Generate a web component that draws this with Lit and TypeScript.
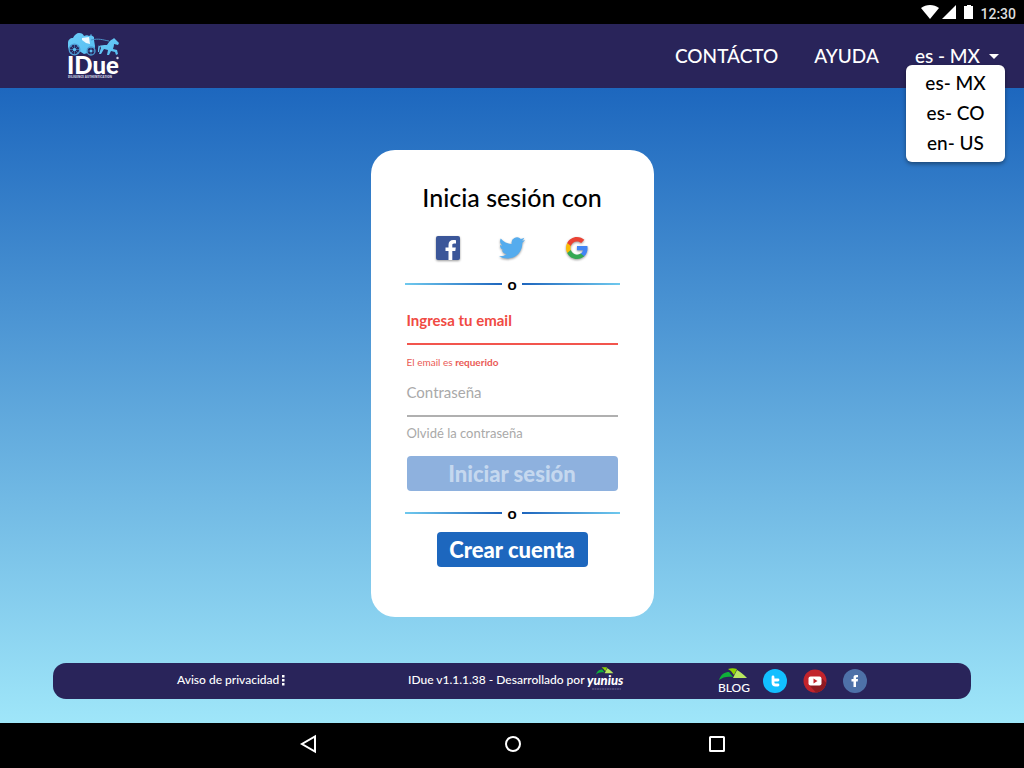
import { LitElement, html, css, svg } from "lit";
import { customElement, state } from "lit/decorators.js";

const brandLogo = html`<svg class="brand-art" viewBox="0 0 54 50" aria-label="IDue">
  <defs>
    <linearGradient id="sky" x1="0" y1="0" x2="1" y2="1">
      <stop offset="0" stop-color="#6ccdf8" /><stop offset="1" stop-color="#55bdf2" />
    </linearGradient>
  </defs>
  <g fill="url(#sky)">
    <path d="M2 12c0-3 2-5 5-5 1-3 4-5 6-5 3 0 4 1 5 3 2-1 4-1 5 0l2-1 3 2v3l1 6c0 3-1 5-3 6l-8 2-8-5-7 1-1-3z" />
    <path d="M33 15c2-1 5-1 8-1 2-3 3-5 6-6l1-1 1 1 4 4-1 2-4-1c0 3-1 4-1 5l4 1 1 4-2 1-1-3-4-1-2 4h-2l1-5-4-1-3 5h-2l2-6-1-2-1 6h-1c0-3 0-5 1-7z" />
  </g>
  <path d="M16 7l7-1 1 7-4-1-4-3z" fill="#eaf8ff" />
  <path d="M25 5V3M25 9c8-2 12 0 18 1" fill="none" stroke="#4a8fc6" stroke-width="1" />
  <g fill="#29265c" stroke="#4b9bd3" stroke-width="1.3">
    <circle cx="8.500" cy="18.500" r="5.300" /><circle cx="25" cy="20" r="4" />
  </g>
  <path d="M3 18.500h11M8.500 13v11M4.700 14.700l7.600 7.600M12.300 14.700l-7.600 7.600M21 20h8M25 16v8" stroke="#4b9bd3" stroke-width=".6" />
  <circle cx="8.500" cy="18.500" r="1.600" fill="#5ec3f5" /><circle cx="25" cy="20" r="1.300" fill="#5ec3f5" />
  <text x="1" y="43" font-size="24" font-weight="900" fill="#fff" font-family="Lato, sans-serif">IDue</text>
  <circle cx="51.500" cy="27" r="1.200" fill="#d5d4e4" />
  <text x="2" y="47" font-size="3" font-weight="900" fill="#c6c5da" font-family="Open Sans, sans-serif">DILIGENCE AUTHENTICATION</text>
</svg>`;

const leaves = svg`
  <path d="M0 12C2 6 6 4 10 4l4 5C8 8 4 9 0 12z" fill="#10b03a" />
  <path d="M9 1c3-1 6-1 9 0l-3 6-3-4z" fill="#8fd400" />
  <path d="M18 2c4 2 7 5 10 8H14z" fill="#b9e860" />`;

const facebookIcon = html`<svg viewBox="0 0 28 28" aria-hidden="true">
  <rect x="2" y="2" width="24" height="24" rx="2" fill="#3b5699" />
  <path d="M14.500 26v-9h-3v-3.600h3V11c0-3.200 1.900-5 4.800-5 1 0 2 .1 2.700.2v3.200h-1.900c-1.500 0-1.800.8-1.800 1.800v2.200h3.500l-.5 3.600h-3v9z" fill="#fff" />
</svg>`;

const twitterIcon = html`<svg viewBox="0 0 24 24" aria-hidden="true">
  <path fill="#55acee" d="M23.953 4.570a10 10 0 01-2.825.775 4.958 4.958 0 002.163-2.723c-.951.555-2.005.959-3.127 1.184a4.920 4.920 0 00-8.384 4.482C7.690 8.095 4.067 6.130 1.640 3.162a4.822 4.822 0 00-.666 2.475c0 1.710.870 3.213 2.188 4.096a4.904 4.904 0 01-2.228-.616v.060a4.923 4.923 0 003.946 4.827 4.996 4.996 0 01-2.212.085 4.936 4.936 0 004.604 3.417 9.867 9.867 0 01-6.102 2.105c-.390 0-.779-.023-1.170-.067a13.995 13.995 0 007.557 2.209c9.053 0 13.998-7.496 13.998-13.985 0-.210 0-.420-.015-.630A9.935 9.935 0 0024 4.590z" />
</svg>`;

const googleIcon = html`<svg viewBox="0 0 24 24" aria-hidden="true">
  <path fill="#4285f4" d="M22.560 12.250c0-.780-.070-1.530-.200-2.250H12v4.260h5.920c-.260 1.370-1.040 2.530-2.210 3.310v2.770h3.570c2.080-1.920 3.280-4.740 3.280-8.090z" />
  <path fill="#34a853" d="M12 23c2.970 0 5.460-.980 7.280-2.660l-3.570-2.770c-.980.660-2.230 1.060-3.710 1.060-2.860 0-5.290-1.930-6.160-4.530H2.180v2.840C3.990 20.530 7.700 23 12 23z" />
  <path fill="#fbbc05" d="M5.840 14.090c-.220-.660-.350-1.360-.350-2.090s.130-1.430.350-2.090V7.070H2.180C1.430 8.550 1 10.220 1 12s.430 3.450 1.180 4.930z" />
  <path fill="#ea4335" d="M12 5.380c1.620 0 3.060.560 4.210 1.640l3.150-3.150C17.450 2.090 14.970 1 12 1 7.700 1 3.990 3.470 2.180 7.070l3.660 2.840c.870-2.600 3.300-4.530 6.160-4.530z" />
</svg>`;

@customElement("app-root")
export class AppRoot extends LitElement {
  @state() private menuOpen = true;
  @state() private locale = "es - MX";

  private locales = ["es- MX", "es- CO", "en- US"];

  static styles = css`
    :host {
      display: flex;
      flex-direction: column;
      min-height: 100vh;
      font-family: Lato, "Open Sans", sans-serif;
      color: #000;
    }
    * { box-sizing: border-box; }
    button { font: inherit; border: 0; background: none; padding: 0; color: inherit; cursor: pointer; }
    a { color: inherit; text-decoration: none; }
    h1, p { margin: 0; }
    svg { display: block; }

    .status {
      display: flex;
      justify-content: flex-end;
      align-items: center;
      height: 24px;
      padding-right: 8px;
      background: #000;
      color: #fff;
    }
    .status-icons { width: 56px; height: 24px; }
    .clock { font: 500 14px/24px Roboto, sans-serif; padding-top: 4px; color: #ddd; margin-left: 4px; }

    .header {
      display: flex;
      justify-content: space-between;
      align-items: center;
      height: 64px;
      padding: 0 25px 0 66px;
      background: #29245a;
      color: #fff;
    }
    .brand-art { width: 54px; height: 50px; }
    .links { display: flex; align-items: center; gap: 36px; font-size: 19px; line-height: 24px; font-weight: 500; }
    .locale { position: relative; }
    .locale-toggle { display: flex; align-items: center; gap: 9px; }
    .caret { width: 10px; height: 5px; }
    .menu {
      position: absolute;
      z-index: 1;
      top: 21px;
      right: -6px;
      width: 99px;
      padding: 3px 0 4px;
      border-radius: 6px;
      background: #fff;
      color: #000;
      box-shadow: 0 2px 4px rgba(0, 0, 0, 0.4);
    }
    .menu-item { display: block; width: 100%; line-height: 30px; }

    .page {
      flex: 1;
      display: flex;
      flex-direction: column;
      align-items: center;
      justify-content: space-between;
      gap: 24px;
      padding: 62px 53px 24px;
      background: linear-gradient(#1d67be, #9fe6f9);
    }
    .card { width: 283px; padding: 30px 34px 50px; border-radius: 24px; background: #fff; }
    .title { font-size: 25px; line-height: 34px; font-weight: 500; text-align: center; }
    .providers { display: flex; justify-content: space-between; margin: 20px 29px 15px; }
    .provider { width: 28px; height: 28px; filter: drop-shadow(0 1px 1px rgba(0, 0, 0, 0.4)); }
    .provider.medium { padding: 1px; }
    .provider.small { padding: 2px; }

    .or { display: flex; align-items: center; gap: 5px; height: 14px; font-size: 16px; line-height: 14px; font-weight: 700; }
    .or::before, .or::after { content: ""; flex: 1; height: 2px; background: linear-gradient(to right, #6fc9ee, #1e65bd); }
    .or::after { background: linear-gradient(to left, #6fc9ee, #1e65bd); }

    .form { display: flex; flex-direction: column; padding: 20px 2px 15px; }
    .label { font-size: 15px; line-height: 18px; color: #a9a9a9; }
    .input {
      width: 100%;
      height: 16px;
      padding: 0;
      border: 0;
      border-bottom: 2px solid #b0b0b0;
      background: none;
      font: inherit;
      font-size: 12px;
      outline: none;
    }
    .label.invalid { color: #f04a43; font-weight: 700; }
    .input.invalid { border-color: #f2554d; }
    .error { margin: 9px 0 13px; font-size: 10px; line-height: 16px; color: #ea5a55; }
    .forgot { margin: 7px 0 14px; font-size: 13px; line-height: 18px; color: #a9a9a9; }
    .action { display: block; height: 35px; border-radius: 4px; font-size: 22px; font-weight: 900; background: #1d67be; color: #fff; }
    .action.submit { background: #8eb1de; color: #c5d8ef; cursor: default; }
    .action.create { width: 151px; margin: 12px auto 0; }

    .footer {
      display: grid;
      grid-template-columns: 231fr 310fr 253fr;
      align-items: center;
      width: 100%;
      height: 36px;
      padding-left: 124px;
      border-radius: 13px;
      background: #29245a;
      color: #fff;
      font-size: 12px;
      line-height: 16px;
      font-weight: 500;
    }
    .privacy, .credit { display: flex; align-items: center; gap: 2px; padding-bottom: 2px; }
    .dots { width: 4px; height: 12px; }
    .yunius { width: 38px; height: 28px; }
    .social { display: flex; align-items: center; gap: 16px; }
    .blog { margin-right: -3px; }
    .blog-art { width: 32px; height: 28px; }
    .round { width: 24px; height: 24px; }

    .system { display: flex; justify-content: center; align-items: center; gap: 180px; height: 45px; padding-bottom: 3px; background: #000; }
    .key { width: 24px; height: 24px; }
    .key-art { fill: none; stroke: #fff; stroke-width: 2; }
  `;

  private choose(value: string) {
    this.locale = value.replace("-", " -");
    this.menuOpen = false;
  }

  private renderStatus() {
    return html`<div class="status">
      <svg class="status-icons" viewBox="0 0 56 24" fill="#fff" aria-hidden="true">
        <path d="M1 8C6 4 14 4 19 8L10 19z" />
        <path d="M36 5v14H22z" />
        <path d="M44 6h3V5h4v1h2v13h-9z" />
      </svg>
      <time class="clock">12:30</time>
    </div>`;
  }

  private renderHeader() {
    return html`<header class="header">
      <a href="#">${brandLogo}</a>
      <nav class="links">
        <a href="#contacto">CONTÁCTO</a>
        <a href="#ayuda">AYUDA</a>
        <div class="locale">
          <button class="locale-toggle" aria-haspopup="menu" aria-expanded=${this.menuOpen}
            @click=${() => (this.menuOpen = !this.menuOpen)}>
            ${this.locale}
            <svg class="caret" viewBox="0 0 10 5" aria-hidden="true"><path d="M0 0h10L5 5z" fill="#fff" /></svg>
          </button>
          ${this.menuOpen
            ? html`<div class="menu" role="menu">
                ${this.locales.map((l) => html`<button class="menu-item" role="menuitem" @click=${() => this.choose(l)}>${l}</button>`)}
              </div>`
            : null}
        </div>
      </nav>
    </header>`;
  }

  private renderCard() {
    return html`<section class="card">
      <h1 class="title">Inicia sesión con</h1>
      <div class="providers">
        <button class="provider" aria-label="Facebook">${facebookIcon}</button>
        <button class="provider medium" aria-label="Twitter">${twitterIcon}</button>
        <button class="provider small" aria-label="Google">${googleIcon}</button>
      </div>
      <div class="or">o</div>
      <form class="form" @submit=${(e: Event) => e.preventDefault()}>
        <label class="label invalid" for="email">Ingresa tu email</label>
        <input class="input invalid" id="email" type="email" aria-describedby="email-error" />
        <p class="error" id="email-error">El email es <b>requerido</b></p>
        <label class="label" for="password">Contraseña</label>
        <input class="input" id="password" type="password" />
        <a class="forgot" href="#recuperar">Olvidé la contraseña</a>
        <button class="action submit" type="submit" disabled>Iniciar sesión</button>
      </form>
      <div class="or">o</div>
      <button class="action create">Crear cuenta</button>
    </section>`;
  }

  private renderFooter() {
    return html`<footer class="footer">
      <a class="privacy" href="#privacidad">Aviso de privacidad
        <svg class="dots" viewBox="0 0 4 12" fill="#fff" aria-hidden="true">
          <rect x="1" y="1" width="2.500" height="2.500" /><rect x="1" y="5" width="2.500" height="2.500" /><rect x="1" y="9" width="2.500" height="2.500" />
        </svg>
      </a>
      <div class="credit">
        <span>IDue v1.1.1.38 - Desarrollado por</span>
        <svg class="yunius" viewBox="0 0 38 28" aria-label="yunius">
          <g transform="translate(9 1) scale(.62)">${leaves}</g>
          <text x="0" y="19" font-size="13" font-weight="900" font-style="italic" fill="#fff" font-family="Lato, sans-serif">yunius</text>
          <path d="M5 23h29" stroke="#6c6990" stroke-width="1" stroke-dasharray="2 .5" />
        </svg>
      </div>
      <div class="social">
        <a class="blog" href="#blog">
          <svg class="blog-art" viewBox="0 0 32 28">
            <g transform="translate(1 1)">${leaves}</g>
            <text x="0" y="25" font-size="12" font-weight="500" fill="#fff" font-family="Lato, sans-serif">BLOG</text>
          </svg>
        </a>
        <a href="#twitter" aria-label="Twitter">
          <svg class="round" viewBox="0 0 24 24"><circle cx="12" cy="12" r="12" fill="#12bfff" />
            <path d="M10 8v5.500c0 1.700 1 2.500 2.500 2.500H15M10 11h5" fill="none" stroke="#fff" stroke-width="2.800" stroke-linecap="round" /></svg>
        </a>
        <a href="#youtube" aria-label="YouTube">
          <svg class="round" viewBox="0 0 24 24"><circle cx="12" cy="12" r="11.500" fill="#c2242c" />
            <path d="M18 8l5.300 6A11.500 11.500 0 0 1 13 23.500L6 16z" fill="#901b22" />
            <rect x="5.500" y="7.500" width="13" height="9" rx="2" fill="#fff" /><path d="M10.500 9.500v5l4-2.500z" fill="#c2242c" /></svg>
        </a>
        <a href="#facebook" aria-label="Facebook">
          <svg class="round" viewBox="0 0 24 24"><circle cx="12" cy="12" r="12" fill="#4e71a8" />
            <path d="M10.500 18v-5.500h-2V10h2V8.500C10.500 6.700 11.600 6 13 6h2v2.300h-1.200c-.5 0-.8.200-.8.800V10h2l-.3 2.500H13V18z" fill="#fff" /></svg>
        </a>
      </div>
    </footer>`;
  }

  private renderSystemBar() {
    return html`<nav class="system">
      <button class="key" aria-label="Atrás"><svg class="key-art" viewBox="0 0 24 24"><path d="M19 4.500v15L6 12z" /></svg></button>
      <button class="key" aria-label="Inicio"><svg class="key-art" viewBox="0 0 24 24"><circle cx="13" cy="12" r="7" /></svg></button>
      <button class="key" aria-label="Recientes"><svg class="key-art" viewBox="0 0 24 24"><rect x="6" y="5" width="14" height="14" rx=".5" /></svg></button>
    </nav>`;
  }

  render() {
    return html`${this.renderStatus()} ${this.renderHeader()}
      <main class="page">${this.renderCard()} ${this.renderFooter()}</main>
      ${this.renderSystemBar()}`;
  }
}
